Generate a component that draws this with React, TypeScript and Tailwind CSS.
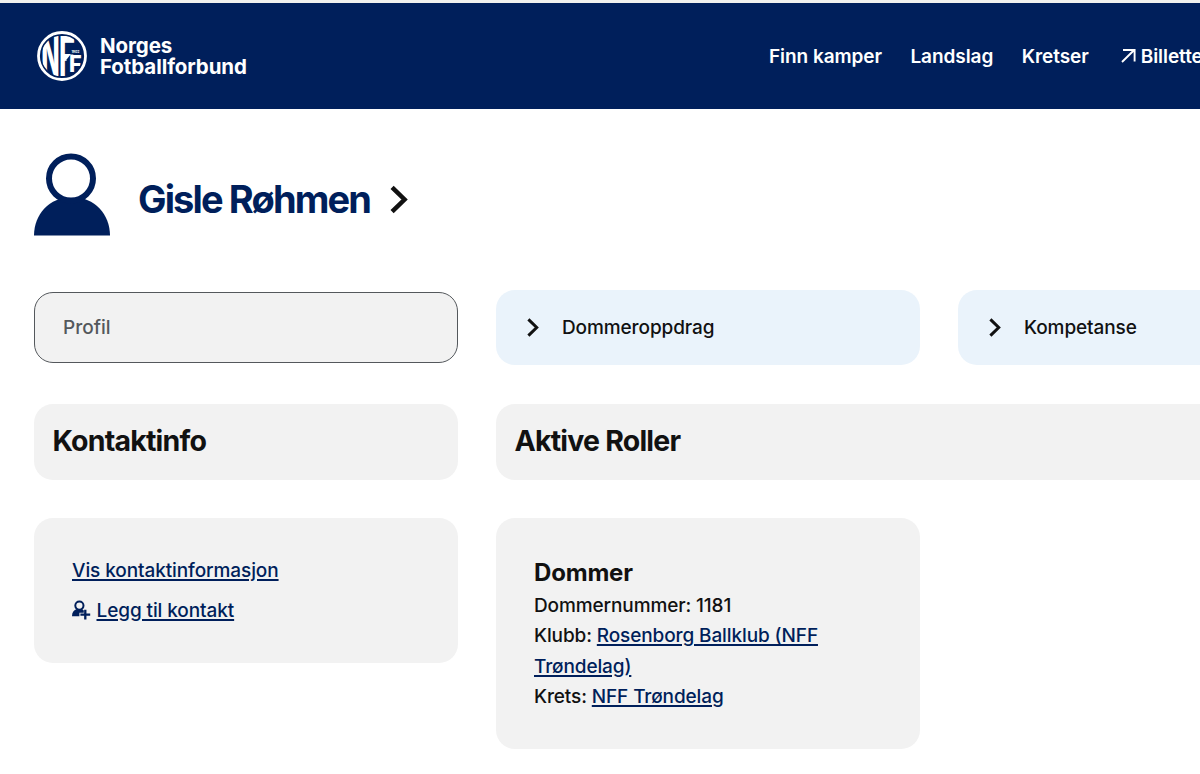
import React from "react";

// ─── Icons ───────────────────────────────────────────────────────

function NffLogo() {
  return (
    <svg width="50" height="50" viewBox="0 0 50 50" className="shrink-0" aria-hidden="true">
      <g fill="#fff" fontFamily="Inter, sans-serif" fontWeight="700" fontSize="20">
        <text transform="translate(4.2 45.4) scale(1.2 2.76)" fontWeight="800">
          N
        </text>
        <text transform="translate(21.8 45.4) scale(1.4 2.76)">F</text>
      </g>
      <path d="M29.6 28.5 33.5 23.5H50V50H29.6z" fill="#001f5b" />
      <text
        transform="translate(32 41.4) scale(1.08 1.14)"
        fill="#fff"
        fontFamily="Inter, sans-serif"
        fontWeight="800"
        fontSize="20"
      >
        F
      </text>
      <text x="34.4" y="21.6" fill="#fff" fontFamily="Inter, sans-serif" fontSize="3.4" fontWeight="700">
        1902
      </text>
      {/* rings trim the letters to the disc */}
      <circle cx="25" cy="25" r="29" fill="none" stroke="#001f5b" strokeWidth="16.8" />
      <circle cx="25" cy="25" r="23.5" fill="none" stroke="#fff" strokeWidth="2.8" />
    </svg>
  );
}

function PersonIcon() {
  return (
    <svg width="76" height="83" viewBox="0 0 76 83" className="shrink-0" aria-hidden="true">
      <path d="M0 82.5C0 62 15 44 38 44s38 18 38 38.5z" fill="#001f5b" />
      <circle cx="37" cy="25.5" r="22" fill="#fff" stroke="#001f5b" strokeWidth="6" />
    </svg>
  );
}

interface ChevronProps {
  className: string;
}

function Chevron({ className }: ChevronProps) {
  return (
    <svg viewBox="0 0 12 19" fill="none" className={className} aria-hidden="true">
      <path d="M1.4 1.4 9.7 9.5 1.4 17.6" stroke="#111" strokeWidth="3" />
    </svg>
  );
}

function ArrowOut() {
  return (
    <svg
      width="15"
      height="14"
      viewBox="0 0 15 14"
      fill="none"
      stroke="#fff"
      strokeWidth="1.9"
      className="relative -top-px"
      aria-hidden="true"
    >
      <path d="M1 13 13.2 1M2 1h11.6v11.6" />
    </svg>
  );
}

function AddPersonIcon() {
  return (
    <svg width="19" height="20" viewBox="0 0 19 20" fill="none" className="mb-[3px] shrink-0" aria-hidden="true">
      <path d="M0 16.2C0 12.4 1.8 10 5 9h4.8l2 1.6v2.2H7.4v3.4z" fill="#001f5b" />
      <circle cx="7.4" cy="5.6" r="4.1" fill="#f2f2f2" stroke="#001f5b" strokeWidth="2" />
      <path d="M13.3 9.8v9.6M8.4 14.6h9.8" stroke="#001f5b" strokeWidth="2.3" />
    </svg>
  );
}

// ─── Pieces ──────────────────────────────────────────────────────

interface TextProps {
  children: React.ReactNode;
}

function TextLink({ children }: TextProps) {
  return (
    <a href="#" className="text-[#001f5b] underline decoration-[1.5px] underline-offset-[2px]">
      {children}
    </a>
  );
}

function TabLink({ children }: TextProps) {
  return (
    <a href="#" className="flex h-[75px] items-center rounded-[19px] bg-[#eaf3fb] pl-[31px]">
      <Chevron className="h-[19px] w-[12px]" />
      <span className="ml-[23px] pt-[2px] font-medium tracking-[-0.005em]">{children}</span>
    </a>
  );
}

function SectionHeading({ children }: TextProps) {
  return (
    <h2 className="flex h-[76px] items-center rounded-[19px] bg-[#f2f2f2] pl-[18.5px] text-[28.5px] font-bold tracking-[-0.028em]">
      {children}
    </h2>
  );
}

const navItems = ["Finn kamper", "Landslag", "Kretser"];

function Header() {
  return (
    <header className="flex h-[106px] items-center justify-between bg-[#001f5b] pl-[37px] text-white">
      <a href="#" className="flex items-center gap-[13px]">
        <NffLogo />
        <span className="text-[20.5px] leading-[21px] font-bold tracking-[-0.004em]">
          Norges
          <br />
          Fotballforbund
        </span>
      </a>
      <nav className="flex w-[431px] shrink-0 items-center gap-[28.4px] overflow-hidden pt-[2px] text-[19px] font-semibold tracking-[-0.003em] whitespace-nowrap">
        {navItems.map((item) => (
          <a key={item} href="#">
            {item}
          </a>
        ))}
        <a href="#" className="ml-[4px] flex items-center gap-[4.5px]">
          <ArrowOut />
          Billetter
        </a>
      </nav>
    </header>
  );
}

// ─── Page ────────────────────────────────────────────────────────

export default function App() {
  return (
    <div className="h-[774px] w-[1200px] overflow-hidden bg-white font-['Inter',sans-serif] text-[19px] text-[#111]">
      <div className="h-[3px] bg-[#f1f1ee]" />
      <Header />
      <main className="pl-[34px]">
        <div className="flex h-[127px] items-end pt-[44px]">
          <PersonIcon />
          <h1 className="ml-[28px] pb-[9px] text-[38px] leading-[56px] font-bold tracking-[-0.049em] text-[#001f5b]">
            Gisle Røhmen
          </h1>
          <Chevron className="mb-[22px] ml-[20px] h-[29px] w-[18px]" />
        </div>

        <div className="mt-[54px] grid grid-cols-[424px_424px_424px] items-center gap-x-[38px]">
          <div className="flex h-[71px] items-center rounded-[19px] border border-[#54585c] bg-[#f2f2f2] pt-[2px] pl-[28px] font-medium text-[#54585c]">
            Profil
          </div>
          <TabLink>Dommeroppdrag</TabLink>
          <TabLink>Kompetanse</TabLink>
        </div>

        <div className="mt-[38.5px] grid grid-cols-[424px_886px] items-start gap-x-[38px] gap-y-[38.5px]">
          <SectionHeading>Kontaktinfo</SectionHeading>
          <SectionHeading>Aktive Roller</SectionHeading>

          <section className="flex h-[145px] flex-col gap-[10px] rounded-[19px] bg-[#f2f2f2] px-[38px] pt-[38px] font-[450] leading-[30px] tracking-[-0.005em]">
            <div>
              <TextLink>Vis kontaktinformasjon</TextLink>
            </div>
            <div className="flex items-center gap-[5.5px]">
              <AddPersonIcon />
              <TextLink>Legg til kontakt</TextLink>
            </div>
          </section>

          <section className="h-[231px] w-[424px] rounded-[19px] bg-[#f2f2f2] px-[38px] pt-[38px] font-[450] leading-[30.4px] tracking-[-0.006em]">
            <h3 className="mb-[1px] text-[24px] leading-[34px] font-bold tracking-[-0.008em]">Dommer</h3>
            <p>Dommernummer: 1181</p>
            <p>
              Klubb: <TextLink>Rosenborg Ballklub (NFF Trøndelag)</TextLink>
            </p>
            <p>
              Krets: <TextLink>NFF Trøndelag</TextLink>
            </p>
          </section>
        </div>
      </main>
    </div>
  );
}
